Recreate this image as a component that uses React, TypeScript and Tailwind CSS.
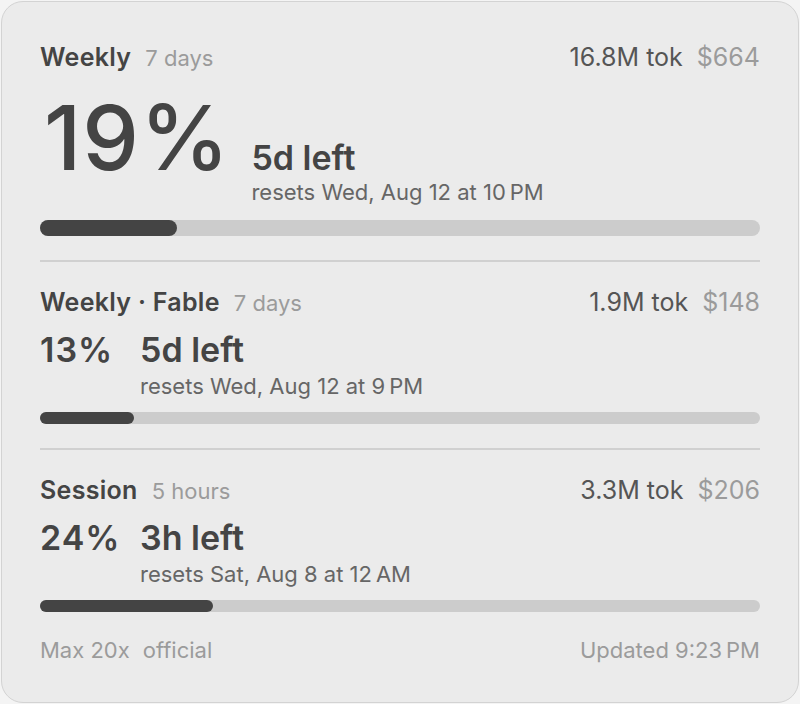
import React from "react";

type Sec = {
  title: string;
  period: string;
  tok: string;
  cost: string;
  pct: number;
  left: string;
  resets: string;
};

const font = { fontFamily: "Inter, 'Noto Sans', sans-serif" };
const NB = "\u202f";

function Header({ s }: { s: Sec }) {
  return (
    <div className="flex items-baseline justify-between h-[28px] leading-[28px] whitespace-nowrap">
      <div className="flex items-baseline gap-[14px]">
        <span className="text-[25px] font-semibold text-[#444444] tracking-[0.3px]">{s.title}</span>
        <span className="text-[22px] text-[#9b9b9b]">{s.period}</span>
      </div>
      <div className="flex items-baseline gap-[14px]">
        <span className="text-[25px] text-[#555555]">{s.tok}</span>
        <span className="text-[25px] text-[#9b9b9b]">{s.cost}</span>
      </div>
    </div>
  );
}

function Bar({ pct, h }: { pct: number; h: string }) {
  return (
    <div className={`w-full rounded-full bg-[#cccccc] ${h}`}>
      <div className={`rounded-full bg-[#444444] ${h}`} style={{ width: `${pct}%` }} />
    </div>
  );
}

export default function App() {
  const main: Sec = {
    title: "Weekly",
    period: "7 days",
    tok: "16.8M tok",
    cost: "$664",
    pct: 19,
    left: "5d left",
    resets: `resets Wed, Aug 12 at 10${NB}PM`,
  };
  const subs: Sec[] = [
    {
      title: "Weekly · Fable",
      period: "7 days",
      tok: "1.9M tok",
      cost: "$148",
      pct: 13,
      left: "5d left",
      resets: `resets Wed, Aug 12 at 9${NB}PM`,
    },
    {
      title: "Session",
      period: "5 hours",
      tok: "3.3M tok",
      cost: "$206",
      pct: 24,
      left: "3h left",
      resets: `resets Sat, Aug 8 at 12${NB}AM`,
    },
  ];

  return (
    <div className="w-[800px] h-[704px] bg-[#f4f4f4] p-px" style={font}>
      <div className="h-full rounded-[22px] border border-[#d3d3d3] bg-[#ebebeb] px-[38px] pt-[41px]">
        <Header s={main} />
        <div className="mt-[22px] flex items-baseline whitespace-nowrap">
          <span className="text-[90px] leading-none font-medium text-[#444444] pl-[4px] tracking-[1px]">
            {main.pct}%
          </span>
          <div className="ml-[21px] flex flex-col">
            <span className="text-[34px] leading-[38px] font-semibold text-[#444444]">{main.left}</span>
            <span className="mt-[3px] text-[22px] leading-[24px] text-[#666666]">{main.resets}</span>
          </div>
        </div>
        <div className="mt-[16px]">
          <Bar pct={main.pct} h="h-[16px]" />
        </div>

        {subs.map((s) => (
          <div key={s.title}>
            <div className="mt-[24px] h-[2px] bg-[#d0d0d0]" />
            <div className="mt-[26px]">
              <Header s={s} />
            </div>
            <div className="mt-[15px] flex items-baseline whitespace-nowrap">
              <span className="w-[100px] text-[34px] leading-[38px] font-semibold text-[#444444] tracking-[1px]">
                {s.pct}%
              </span>
              <span className="text-[34px] leading-[38px] font-semibold text-[#444444]">{s.left}</span>
            </div>
            <div className="mt-[5px] pl-[100px] text-[22px] leading-[24px] text-[#666666] whitespace-nowrap">
              {s.resets}
            </div>
            <div className="mt-[14px]">
              <Bar pct={s.pct} h="h-[12px]" />
            </div>
          </div>
        ))}

        <div className="mt-[24px] flex justify-between text-[22px] leading-[28px] text-[#9b9b9b] whitespace-nowrap">
          <span>
            Max 20x<span className="ml-[13px]">official</span>
          </span>
          <span>{`Updated 9:23${NB}PM`}</span>
        </div>
      </div>
    </div>
  );
}
